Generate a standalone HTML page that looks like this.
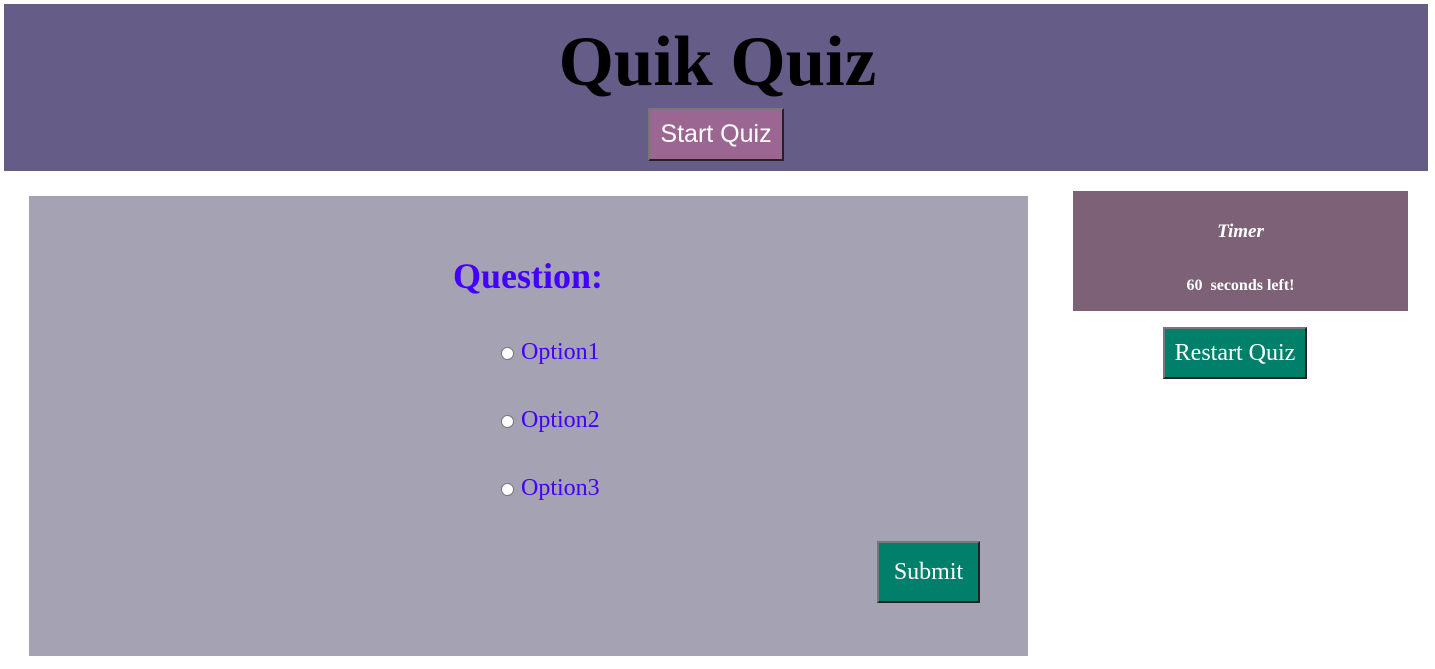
<!DOCTYPE html>
<html><head><meta charset="utf-8"><style>
*{margin:0;padding:0;box-sizing:border-box}
body{width:1435px;height:669px;background:#fff;position:relative;overflow:hidden;font-family:"Liberation Serif",serif}
.a{position:absolute}
#hdr{left:4px;top:4px;width:1424px;height:167px;background:#655d88}
h1{position:absolute;left:0;width:1435px;top:20px;text-align:center;font-size:71px;font-weight:bold;line-height:84px;color:#000}
.btn{position:absolute;border:2px solid;border-color:#777 #222 #222 #777;color:#fff;display:flex;align-items:center;justify-content:center}
#start{left:648px;top:108px;width:136px;height:53px;background:#9b6692;font-family:"Liberation Sans",sans-serif;font-size:25px}
#panel{left:29px;top:196px;width:999px;height:460px;background:#a5a2b4}
#q{left:0;width:1056px;top:254px;text-align:center;font-size:36px;font-weight:bold;color:#4400ff;line-height:44px}
.opt{position:absolute;left:501px;font-size:24px;color:#4400ff;line-height:28px}
.opt span.r{display:inline-block;width:13px;height:13px;border-radius:50%;background:#fff;border:1px solid #777;margin-right:7px;vertical-align:-1px}
#submit{left:877px;top:541px;width:103px;height:62px;background:#007f6a;font-size:24px}
#timer{left:1073px;top:191px;width:335px;height:120px;background:#7d6176;color:#fff;text-align:center}
#restart{left:1163px;top:327px;width:144px;height:52px;background:#007f6a;font-size:24px}
</style></head><body>
<div id="hdr" class="a"></div>
<h1>Quik Quiz</h1>
<div id="start" class="btn">Start Quiz</div>
<div id="panel" class="a"></div>
<div id="q" class="a">Question:</div>
<div class="opt" style="top:338px"><span class="r"></span>Option1</div>
<div class="opt" style="top:406px"><span class="r"></span>Option2</div>
<div class="opt" style="top:474px"><span class="r"></span>Option3</div>
<div id="submit" class="btn">Submit</div>
<div id="timer" class="a">
<div style="position:absolute;top:30px;width:100%;font-size:19px;font-weight:bold;font-style:italic">Timer</div>
<div style="position:absolute;top:86px;width:100%;font-size:16px;font-weight:bold;white-space:pre">60  seconds left!</div>
</div>
<div id="restart" class="btn">Restart Quiz</div>
</body></html>
